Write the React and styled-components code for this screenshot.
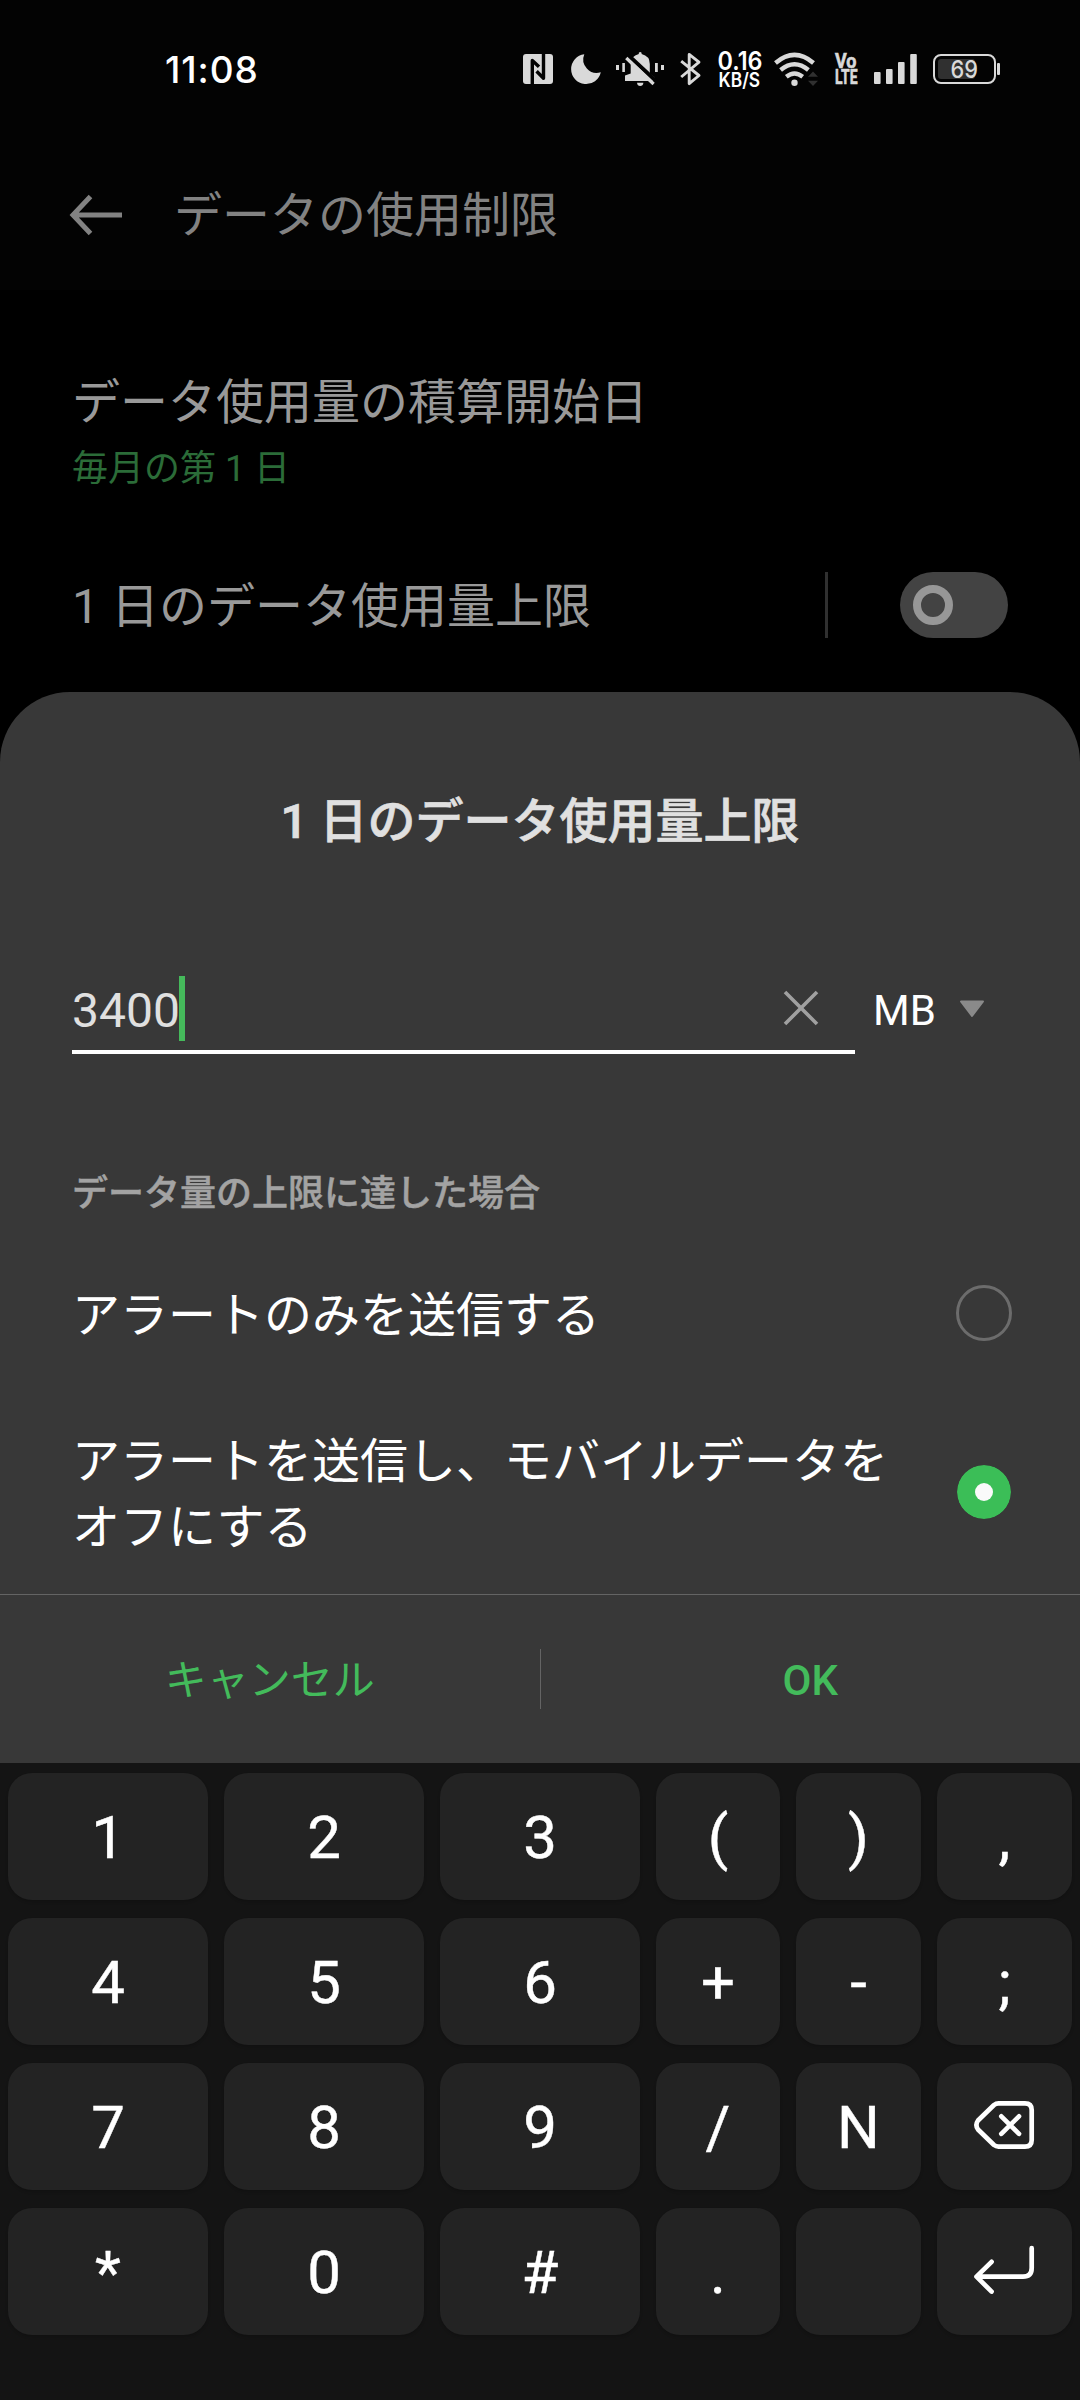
import React from 'react';
import styled, { createGlobalStyle } from 'styled-components';

const GlobalStyle = createGlobalStyle`
  *,
  *::before {
    box-sizing: border-box;
  }
  body {
    margin: 0;
    background-color: #000;
    font-family: Roboto, 'Noto Sans CJK JP', sans-serif;
  }
  svg {
    display: block;
    flex: none;
    overflow: visible;
  }
`;

const Screen = styled.div`
  width: 1080px;
  height: 2400px;
  display: flex;
  flex-direction: column;
  background-color: #000;
  overflow: hidden;
`;

/* status bar + title */

const TopArea = styled.header`
  height: 290px;
  background-color: #030303;
`;

const StatusBar = styled.div`
  height: 138px;
  padding: 0 80px 0 165px;
  display: flex;
  align-items: center;
  justify-content: space-between;
`;

const Clock = styled.span`
  font-family: Inter, sans-serif;
  font-weight: 500;
  font-size: 37px;
  line-height: 44px;
  letter-spacing: 0.9px;
  margin: 1px 0 -1px;
  color: #fff;
`;

const StatusIcons = styled.div`
  display: flex;
  align-items: center;
`;

const StatusIcon = styled.div`
  margin-left: ${(props) => props.$gap || 0}px;
`;

const TitleBar = styled.div`
  height: 152px;
  padding: 2px 70px 0 68px;
  display: flex;
  align-items: center;
  gap: 50px;
`;

const PageTitle = styled.h1`
  margin: 1px 0 -1px;
  font-weight: 400;
  font-size: 48px;
  line-height: 70px;
  color: #828282;
`;

/* settings list */

const Settings = styled.main`
  height: 402px;
  padding: 76px 72px 0;
`;

const Setting = styled.div`
  height: 204px;
  padding-top: 2px;
`;

const SettingName = styled.div`
  font-size: 48px;
  line-height: 70px;
  color: #999;
`;

const SettingValue = styled.div`
  font-size: 36px;
  line-height: 52px;
  margin-top: 5px;
  color: #2b6c38;
`;

const ToggleSetting = styled.div`
  display: flex;
  align-items: center;
  height: 70px;

  ${SettingName} {
    flex: 1;
    margin: 2px 0 -2px;
  }
`;

const SettingDivider = styled.div`
  width: 3px;
  height: 66px;
  background-color: #303030;
  margin-right: 72px;
`;

const Toggle = styled.div`
  width: 108px;
  height: 66px;
  padding-left: 13px;
  border-radius: 33px;
  display: flex;
  align-items: center;
  background-color: #434343;

  &::before {
    content: '';
    width: 40px;
    height: 40px;
    border: 8px solid #979797;
    border-radius: 50%;
  }
`;

/* bottom sheet */

const Sheet = styled.section`
  height: 1071px;
  background-color: #383838;
  border-radius: 70px 70px 0 0;
  display: flex;
  flex-direction: column;
`;

const SheetTitle = styled.h2`
  margin: 95px 0 0;
  text-align: center;
  font-weight: 500;
  font-size: 48px;
  line-height: 70px;
  color: #e0e0e0;
  -webkit-text-stroke: 0.7px #e0e0e0;
`;

const InputRow = styled.div`
  margin: 112px 72px 0;
  height: 93px;
  display: flex;
`;

const Field = styled.div`
  width: 783px;
  height: 85px;
  padding-right: 36px;
  border-bottom: 4px solid #fff;
  display: flex;
  align-items: flex-start;
`;

const FieldText = styled.span`
  font-size: 48px;
  line-height: 56px;
  margin-top: 14px;
  color: #e0e0e0;
`;

const Caret = styled.span`
  width: 6px;
  height: 65px;
  margin-top: 7px;
  margin-left: -1px;
  background-color: #45b95b;
`;

const ClearButton = styled.div`
  margin: 21px 0 0 auto;
`;

const Unit = styled.div`
  height: 50px;
  margin: 15px 0 0 18px;
  display: flex;
  align-items: center;
  gap: 23px;
  font-size: 42px;
  line-height: 50px;
  color: #fff;
`;

const UnitName = styled.span`
  margin: 2px 0 -2px;
`;

const GroupLabel = styled.div`
  margin: 106px 72px 0;
  font-weight: 500;
  font-size: 36px;
  line-height: 52px;
  color: #a3a3a3;
  -webkit-text-stroke: 0.5px #a3a3a3;
`;

const Option = styled.div`
  margin: ${(props) => props.$top}px 68px 0 72px;
  display: flex;
  align-items: center;
  justify-content: space-between;
  font-size: 48px;
  line-height: 66px;
  color: #fff;
`;

const OptionText = styled.div`
  width: 830px;
  margin: 3px 0 -3px;
`;

const Radio = styled.div`
  width: 56px;
  height: 56px;
  border-radius: 50%;
  border: 3px solid #6c6c6c;
  display: flex;
  align-items: center;
  justify-content: center;

  ${(props) =>
    props.$checked &&
    `
    border: 1px solid #383838;
    background-color: #3bbe57;
    background-clip: padding-box;

    &::before {
      content: '';
      width: 18px;
      height: 18px;
      border-radius: 50%;
      background-color: #fafafa;
    }
  `}
`;

const Actions = styled.div`
  margin-top: auto;
  height: 169px;
  border-top: 1px solid #646464;
  display: flex;
  align-items: center;
`;

const Action = styled.div`
  flex: 1;
  margin: 2px 0 -2px;
  text-align: center;
  font-size: 42px;
  font-weight: ${(props) => (props.$strong ? 500 : 400)};
  line-height: 62px;
  color: #43bb5b;
`;

const ActionDivider = styled.div`
  width: 1px;
  height: 60px;
  background-color: #646464;
`;

/* keyboard */

const Keyboard = styled.div`
  flex: 1;
  padding: 10px 8px 0;
  background-color: #141414;
  display: grid;
  grid-template-columns: 200px 200px 200px 124px 125px 135px;
  grid-auto-rows: 127px;
  align-content: start;
  column-gap: 16px;
  row-gap: 18px;
`;

const Key = styled.div`
  border-radius: 24px;
  background-color: #232323;
  box-shadow: 0 2px 3px rgba(0, 0, 0, 0.15);
  display: flex;
  align-items: center;
  justify-content: center;
  padding: ${(props) => (props.$icon ? '0 1px 3px 0' : '3px 0 0')};
  font-size: 60px;
  line-height: 70px;
  color: #fff;
  -webkit-text-stroke: 0.4px #fff;
`;

const NfcIcon = () => (
  <svg width="30" height="30" viewBox="0 0 30 30">
    <rect width="30" height="30" rx="3" fill="#d9d9d9" />
    <g fill="none" stroke="#030303" strokeWidth="3.4">
      <path d="M9.3 30V6.5L16 12.8" strokeLinejoin="round" />
      <path d="M20.5 0V24.3L13.6 17.3" strokeLinejoin="round" />
    </g>
  </svg>
);

const MoonIcon = () => (
  <svg width="30" height="30" viewBox="0 0 30 30">
    <path
      d="M13.3 0.2A15 15 0 1 0 29.8 18.2A13.5 13.5 0 0 1 13.3 0.2Z"
      fill="#d9d9d9"
    />
  </svg>
);

const MutedBellIcon = () => (
  <svg width="48" height="34" viewBox="0 0 48 34">
    <g fill="#d9d9d9">
      <rect x="0" y="13" width="3" height="5" />
      <rect x="6.3" y="11" width="2.6" height="9" />
      <rect x="39" y="11" width="2.8" height="9" />
      <rect x="45" y="13" width="3" height="5" />
      <path d="M22.8 2V0.8Q24.2 -0.6 25.6 0.8V2Q33.8 4 33.8 12V21.5L39 25.5V29H9V23.5L14.7 21.5V12Q14.7 4 22.8 2Z" />
      <path d="M21 30.8H27.4Q27 34 24.2 34Q21.4 34 21 30.8Z" />
    </g>
    <path d="M12.5 3.5L41 30" stroke="#030303" strokeWidth="4" />
    <path d="M10.3 6L37.6 32" stroke="#d9d9d9" strokeWidth="3.2" />
  </svg>
);

const BluetoothIcon = () => (
  <svg width="21" height="34" viewBox="0 0 21 34">
    <path
      d="M1.2 9.2L19 23.5L9.2 31.6V2.4L19 10.2L1.2 25"
      fill="none"
      stroke="#d9d9d9"
      strokeWidth="2.9"
      strokeLinejoin="round"
    />
  </svg>
);

const NetSpeed = () => (
  <svg width="46" height="40" viewBox="0 0 46 40" fontFamily="Inter, sans-serif" fill="#fff">
    <text x="0.5" y="20.5" fontSize="26" fontWeight="600" textLength="45" lengthAdjust="spacingAndGlyphs">
      0.16
    </text>
    <text x="1.5" y="37.8" fontSize="19.5" fontWeight="600" textLength="41.5" lengthAdjust="spacingAndGlyphs">
      KB/S
    </text>
  </svg>
);

const WifiIcon = () => (
  <svg width="44" height="34" viewBox="0 0 44 34">
    <g fill="none" stroke="#d9d9d9" strokeWidth="4.4">
      <path d="M1.5 11Q20.5 -5.2 39.5 11" />
      <path d="M6.6 18Q20.5 6.5 34.4 18" />
      <path d="M12.3 24.8Q20.5 18.3 28.7 24.8" />
    </g>
    <circle cx="20.5" cy="30.7" r="3.2" fill="#d9d9d9" />
    <path d="M39 19.5L44 24.8H34ZM39 34L44 28.8H34Z" fill="#303030" />
  </svg>
);

const VolteIcon = () => (
  <svg
    width="23"
    height="32"
    viewBox="0 0 23 32"
    fill="#d9d9d9"
    stroke="#d9d9d9"
    strokeWidth="0.6"
    fontFamily="Roboto, sans-serif"
    fontWeight="700"
  >
    <text x="0" y="15" fontSize="19.5" textLength="21.5" lengthAdjust="spacingAndGlyphs">
      Vo
    </text>
    <text x="0" y="31" fontSize="19.5" textLength="22.5" lengthAdjust="spacingAndGlyphs">
      LTE
    </text>
  </svg>
);

const SignalIcon = () => (
  <svg width="43" height="30" viewBox="0 0 43 30" fill="#d9d9d9">
    <rect x="0" y="18" width="6.6" height="12" rx="1" />
    <rect x="12" y="15" width="6.6" height="15" rx="1" />
    <rect x="24" y="8" width="6.6" height="22" rx="1" />
    <rect x="36.2" y="0" width="6.6" height="30" rx="1" />
  </svg>
);

const BatteryIcon = () => (
  <svg width="67" height="30" viewBox="0 0 67 30">
    <rect x="5" y="5" width="37" height="20" rx="3" fill="#303030" />
    <rect x="1" y="1" width="61" height="28" rx="7" fill="none" stroke="#d9d9d9" strokeWidth="2" />
    <rect x="64" y="9" width="3" height="12" rx="1" fill="#d9d9d9" />
    <text
      x="17.5"
      y="24"
      fontFamily="Inter, sans-serif"
      fontSize="24.5"
      fontWeight="500"
      fill="#d9d9d9"
      textLength="27.5"
      lengthAdjust="spacingAndGlyphs"
    >
      69
    </text>
  </svg>
);

const BackIcon = () => (
  <svg width="56" height="44" viewBox="0 0 56 44">
    <path
      d="M54 22H5M22.5 3.5L5 22L22.5 40.5"
      fill="none"
      stroke="#828282"
      strokeWidth="5"
    />
  </svg>
);

const ClearIcon = () => (
  <svg width="36" height="36" viewBox="0 0 36 36">
    <path d="M2 2L34 34M34 2L2 34" stroke="#a0a0a0" strokeWidth="3.6" />
  </svg>
);

const DropdownIcon = () => (
  <svg width="26" height="18" viewBox="0 0 26 18">
    <path d="M2 1.5H24L13 16Z" fill="#8a8a8a" stroke="#8a8a8a" strokeWidth="2" strokeLinejoin="round" />
  </svg>
);

const BackspaceIcon = () => (
  <svg width="60" height="48" viewBox="0 0 60 48">
    <g fill="none" stroke="#fff" strokeWidth="4.7" strokeLinecap="round" strokeLinejoin="round">
      <path d="M24.5 2.4H51Q57.7 2.4 57.7 9V39Q57.7 45.6 51 45.6H24.5Q22 45.6 20 44L4 28.5Q0.8 24 4 19.5L20 4Q22 2.4 24.5 2.4Z" />
      <path d="M27.3 15.3L45 32.8M45 15.3L27.3 32.8" />
    </g>
  </svg>
);

const EnterIcon = () => (
  <svg width="60" height="48" viewBox="0 0 60 48">
    <path
      d="M57.7 2.2V22Q57.7 30.7 49 30.7H3M17.6 15.8L2.5 30.7L17.6 45.6"
      fill="none"
      stroke="#fff"
      strokeWidth="4.7"
      strokeLinecap="round"
      strokeLinejoin="round"
    />
  </svg>
);

const statusIcons = [
  { icon: NfcIcon, gap: 0 },
  { icon: MoonIcon, gap: 18 },
  { icon: MutedBellIcon, gap: 15 },
  { icon: BluetoothIcon, gap: 16 },
  { icon: NetSpeed, gap: 16 },
  { icon: WifiIcon, gap: 11 },
  { icon: VolteIcon, gap: 17 },
  { icon: SignalIcon, gap: 16 },
  { icon: BatteryIcon, gap: 16 },
];

const keys = [
  '1', '2', '3', '(', ')', ',',
  '4', '5', '6', '+', '-', ';',
  '7', '8', '9', '/', 'N', BackspaceIcon,
  '*', '0', '#', '.', '', EnterIcon,
];

function App() {
  return (
    <Screen>
      <GlobalStyle />
      <TopArea>
        <StatusBar>
          <Clock>11:08</Clock>
          <StatusIcons>
            {statusIcons.map(({ icon: Icon, gap }, i) => (
              <StatusIcon key={i} $gap={gap}>
                <Icon />
              </StatusIcon>
            ))}
          </StatusIcons>
        </StatusBar>
        <TitleBar>
          <BackIcon />
          <PageTitle>データの使用制限</PageTitle>
        </TitleBar>
      </TopArea>

      <Settings>
        <Setting>
          <SettingName>データ使用量の積算開始日</SettingName>
          <SettingValue>毎月の第 1 日</SettingValue>
        </Setting>
        <ToggleSetting>
          <SettingName>1 日のデータ使用量上限</SettingName>
          <SettingDivider />
          <Toggle />
        </ToggleSetting>
      </Settings>

      <Sheet>
        <SheetTitle>1 日のデータ使用量上限</SheetTitle>
        <InputRow>
          <Field>
            <FieldText>3400</FieldText>
            <Caret />
            <ClearButton>
              <ClearIcon />
            </ClearButton>
          </Field>
          <Unit>
            <UnitName>MB</UnitName>
            <DropdownIcon />
          </Unit>
        </InputRow>
        <GroupLabel>データ量の上限に達した場合</GroupLabel>
        <Option $top={60}>
          <OptionText>アラートのみを送信する</OptionText>
          <Radio />
        </Option>
        <Option $top={80}>
          <OptionText>アラートを送信し、モバイルデータをオフにする</OptionText>
          <Radio $checked />
        </Option>
        <Actions>
          <Action>キャンセル</Action>
          <ActionDivider />
          <Action $strong>OK</Action>
        </Actions>
      </Sheet>

      <Keyboard>
        {keys.map((label, i) => {
          const KeyIcon = typeof label === 'function' ? label : null;
          return (
            <Key key={i} $icon={!!KeyIcon}>
              {KeyIcon ? <KeyIcon /> : label}
            </Key>
          );
        })}
      </Keyboard>
    </Screen>
  );
}

export default App;
